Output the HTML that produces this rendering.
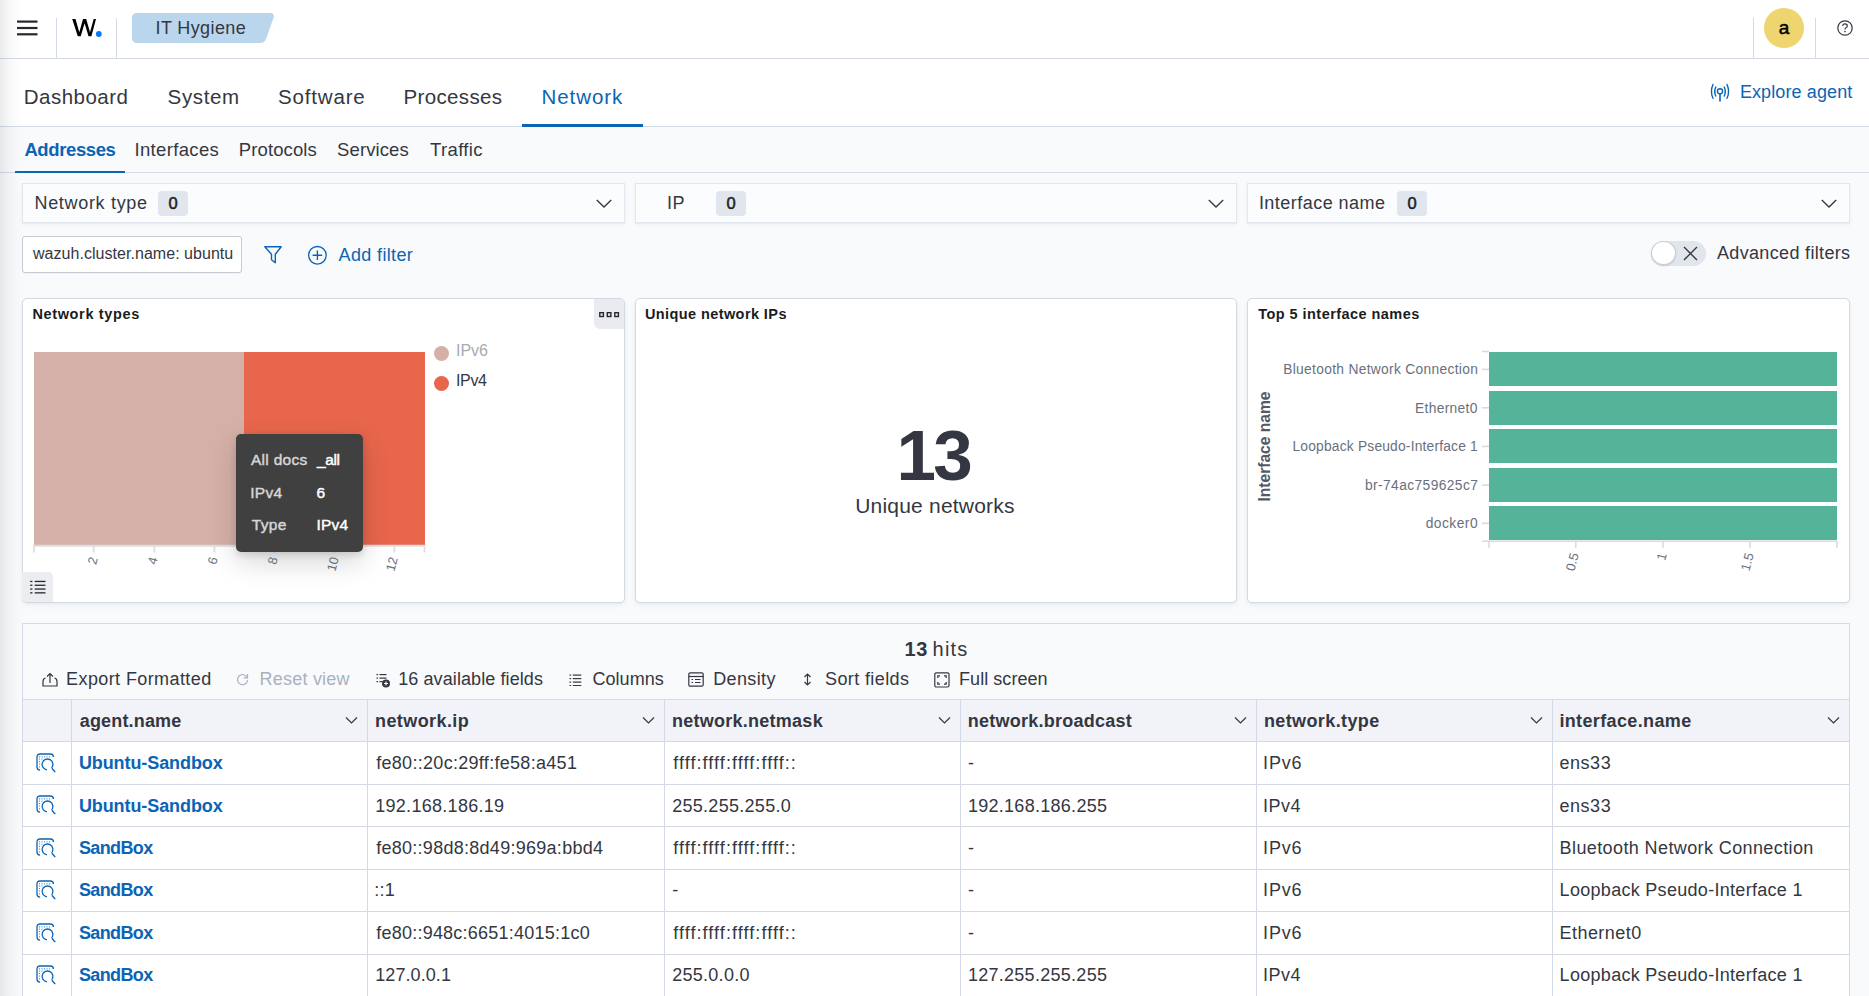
<!DOCTYPE html>
<html><head><meta charset="utf-8">
<style>
*{box-sizing:border-box;margin:0;padding:0}
html,body{width:1869px;height:996px;overflow:hidden}
body{position:relative;background:#F9FAFC;font-family:"Liberation Sans",sans-serif;color:#343741}
.t{position:absolute;white-space:pre;line-height:1}
.abs{position:absolute}
.hdr{left:0;top:0;width:1869px;height:59px;background:#fff;border-bottom:1px solid #D3DAE6}
.tabs{left:0;top:59px;width:1869px;height:68px;background:#fff;border-bottom:1px solid #D3DAE6}
.subtabs{left:0;top:127px;width:1869px;height:46px;background:#F9FAFC;border-bottom:1px solid #D3DAE6}
.vdiv{width:1px;background:#D3DAE6}
.fbox{top:183px;height:39.5px;background:#FBFCFD;border:1px solid #E1E6EF;box-shadow:0 1px 1px rgba(0,0,0,.03),0 2px 4px rgba(0,0,0,.04)}
.badge{top:191px;height:25px;width:30px;background:#E0E5EE;border-radius:4px;font:16.5px/24px "Liberation Sans";color:#1A1C21;text-align:center;-webkit-text-stroke:0.5px #1A1C21}
.panel{top:298px;height:305px;background:#fff;border:1px solid #D3DAE6;border-radius:5px;box-shadow:0 1px 3px rgba(0,0,0,.05),0 3px 7px rgba(0,0,0,.035)}
.lshadow{left:0;top:0;width:22px;height:996px;background:linear-gradient(to right,rgba(110,112,120,.14),rgba(110,112,120,.045) 50%,rgba(110,112,120,0));pointer-events:none}
</style></head><body>

<!-- header -->
<div class="abs hdr"></div>
<svg class="abs" style="left:17px;top:20px" width="21" height="16" viewBox="0 0 21 16">
  <rect x="0" y="0.5" width="20.5" height="2.2" fill="#25282F"/>
  <rect x="0" y="6.9" width="20.5" height="2.2" fill="#25282F"/>
  <rect x="0" y="13.2" width="20.5" height="2.2" fill="#25282F"/>
</svg>
<div class="abs vdiv" style="left:56px;top:18px;height:41px"></div>
<svg class="abs" style="left:70px;top:17px" width="34" height="22" viewBox="70 17 34 22">
  <path d="M72.2 19.1 H75.5 L79.3 32.2 L83 19.1 H86.2 L90 32.2 L93.7 19.1 H96 L91.4 36.2 H88.5 L84.6 23.3 L80.7 36.2 H77.8 Z" fill="#000"/>
  <circle cx="98.8" cy="34" r="2.9" fill="#0A77FA"/>
</svg>
<div class="abs vdiv" style="left:116px;top:18px;height:41px"></div>
<svg class="abs" style="left:131px;top:12px" width="145" height="32" viewBox="0 0 145 32">
  <path d="M6 1 H139 Q144 1 142.5 6 L135 27 Q133.5 31 129 31 H6 Q1 31 1 26 V6 Q1 1 6 1 Z" fill="#B9D6EC"/>
</svg>
<div class="abs vdiv" style="left:1753px;top:18px;height:41px"></div>
<div class="abs" style="left:1764px;top:8px;width:40px;height:40px;border-radius:50%;background:#EFD56F;font:19px/39px 'Liberation Sans';color:#000;text-align:center;-webkit-text-stroke:0.5px #000">a</div>
<div class="abs vdiv" style="left:1815px;top:18px;height:41px"></div>
<svg class="abs" style="left:1836px;top:19px" width="18" height="18" viewBox="0 0 18 18">
  <circle cx="9" cy="9" r="7.2" fill="none" stroke="#343741" stroke-width="1.2"/>
  <path d="M6.7 7.1 Q6.7 4.8 9 4.8 Q11.3 4.8 11.3 6.9 Q11.3 8.3 9.6 9 Q9 9.3 9 10.4" fill="none" stroke="#343741" stroke-width="1.2"/>
  <circle cx="9" cy="12.6" r="0.8" fill="#343741"/>
</svg>

<!-- tabs -->
<div class="abs tabs"></div>
<div class="abs" style="left:522px;top:124px;width:121px;height:3px;background:#0B64B4"></div>
<svg class="abs" style="left:1709px;top:83px" width="22" height="19" viewBox="0 0 22 19">
  <g fill="none" stroke="#0B64B4" stroke-width="1.4" stroke-linecap="round">
    <path d="M4 1.5 Q0.8 8.5 4 15.3"/>
    <path d="M6.8 4 Q4.6 8.5 6.8 13"/>
    <path d="M18 1.5 Q21.2 8.5 18 15.3"/>
    <path d="M15.2 4 Q17.4 8.5 15.2 13"/>
    <circle cx="11" cy="8.3" r="2.6"/>
    <path d="M11 11 V18" stroke-width="1.6"/>
  </g>
</svg>

<!-- subtabs -->
<div class="abs subtabs"></div>
<div class="abs" style="left:15px;top:170.5px;width:110px;height:2.5px;background:#0B64B4"></div>

<!-- filter boxes -->
<div class="abs fbox" style="left:22px;width:603px"></div>
<div class="abs fbox" style="left:635px;width:602px"></div>
<div class="abs fbox" style="left:1247px;width:603px"></div>
<div class="abs badge" style="left:158px">0</div>
<div class="abs badge" style="left:716px">0</div>
<div class="abs badge" style="left:1397px">0</div>
<svg class="abs" style="left:596px;top:198.5px" width="16" height="10" viewBox="0 0 16 10"><path d="M0.8 1 L8 8 L15.2 1" fill="none" stroke="#343741" stroke-width="1.35"/></svg>
<svg class="abs" style="left:1208px;top:198.5px" width="16" height="10" viewBox="0 0 16 10"><path d="M0.8 1 L8 8 L15.2 1" fill="none" stroke="#343741" stroke-width="1.35"/></svg>
<svg class="abs" style="left:1821px;top:198.5px" width="16" height="10" viewBox="0 0 16 10"><path d="M0.8 1 L8 8 L15.2 1" fill="none" stroke="#343741" stroke-width="1.35"/></svg>

<!-- query bar -->
<div class="abs" style="left:22px;top:236px;width:220px;height:37px;background:#fff;border:1px solid #C5CBD4;border-radius:3px;box-shadow:0 1px 1px rgba(0,0,0,.05)"></div>
<svg class="abs" style="left:263px;top:245px" width="20" height="20" viewBox="0 0 20 20">
  <path d="M1.8 1.8 H18.2 L12.3 9.2 V17.8 L8.5 14.8 V9.2 Z" fill="none" stroke="#0B64B4" stroke-width="1.4" stroke-linejoin="round"/>
</svg>
<svg class="abs" style="left:307px;top:245px" width="21" height="21" viewBox="0 0 21 21">
  <circle cx="10.4" cy="10.3" r="8.8" fill="none" stroke="#0B64B4" stroke-width="1.3"/>
  <path d="M10.4 5.5 V15.1 M5.6 10.3 H15.2" stroke="#0B64B4" stroke-width="1.4"/>
</svg>
<!-- toggle -->
<div class="abs" style="left:1651px;top:241px;width:55px;height:25px;border-radius:13px;background:#E1E5EC"></div>
<div class="abs" style="left:1651px;top:241px;width:24.5px;height:24px;border-radius:50%;background:#fff;border:1px solid #C6CCD6;box-shadow:0 1px 2px rgba(0,0,0,.12)"></div>
<svg class="abs" style="left:1683px;top:246px" width="15" height="15" viewBox="0 0 15 15"><path d="M1 1 L14 14 M14 1 L1 14" stroke="#343741" stroke-width="1.4"/></svg>

<!-- panels -->
<div class="abs panel" style="left:22px;width:603px"></div>
<div class="abs panel" style="left:635px;width:602px"></div>
<div class="abs panel" style="left:1247px;width:603px"></div>

<!-- panel 1 chart -->
<div class="abs" style="left:594px;top:299px;width:30px;height:30px;background:#E9EBEE;border-radius:0 4px 0 6px"></div>
<svg class="abs" style="left:598px;top:310.5px" width="23" height="8" viewBox="0 0 23 8">
  <g fill="none" stroke="#25282F" stroke-width="1.4"><rect x="1.8" y="1.7" width="3.6" height="3.8"/><rect x="9.3" y="1.7" width="3.6" height="3.8"/><rect x="16.8" y="1.7" width="3.6" height="3.8"/></g>
</svg>
<div class="abs" style="left:34px;top:352px;width:210px;height:193px;background:#D5B0A8"></div>
<div class="abs" style="left:244px;top:352px;width:181px;height:193px;background:#E7664C"></div>
<svg class="abs" style="left:30px;top:540px" width="400" height="40" viewBox="0 0 400 40">
  <path d="M3.5 5.8 H394.5" stroke="#DCDDDF" stroke-width="2"/>
  <g stroke="#DCDDDF" stroke-width="1.8">
    <path d="M3.9 5 V12.5"/><path d="M63.7 5 V12.5"/><path d="M124.4 5 V12.5"/><path d="M184.4 5 V12.5"/><path d="M244.4 5 V12.5"/><path d="M304.6 5 V12.5"/><path d="M364.4 5 V12.5"/><path d="M394.5 5 V12.5"/>
  </g>
</svg>
<div class="abs" style="left:434px;top:346px;width:15px;height:15px;border-radius:50%;background:#D5B0A8"></div>
<div class="abs" style="left:434px;top:376px;width:15px;height:15px;border-radius:50%;background:#E7664C"></div>
<div class="abs" style="left:22px;top:572px;width:31px;height:30px;background:#EBEDF0;border-radius:0 5px 0 5px"></div>
<svg class="abs" style="left:29px;top:579px" width="18" height="16" viewBox="0 0 18 16">
  <g fill="#25282F"><rect x="1.2" y="1.8" width="2.2" height="1.3"/><rect x="1.2" y="5.6" width="2.2" height="1.3"/><rect x="1.2" y="9.4" width="2.2" height="1.3"/><rect x="1.2" y="13.2" width="2.2" height="1.3"/>
  <rect x="5.7" y="1.8" width="10.8" height="1.3"/><rect x="5.7" y="5.6" width="10.8" height="1.3"/><rect x="5.7" y="9.4" width="10.8" height="1.3"/><rect x="5.7" y="13.2" width="10.8" height="1.3"/></g>
</svg>
<!-- tooltip -->
<div class="abs" style="left:236px;top:434px;width:127px;height:118px;background:#404040;border-radius:5px;box-shadow:0 10px 28px rgba(0,0,0,.16),0 3px 7px rgba(0,0,0,.12)"></div>

<!-- panel 3 chart -->
<div class="abs" style="left:1489px;top:352px;width:348px;height:34.3px;background:#54B399"></div>
<div class="abs" style="left:1489px;top:390.6px;width:348px;height:34.3px;background:#54B399"></div>
<div class="abs" style="left:1489px;top:429px;width:348px;height:34.3px;background:#54B399"></div>
<div class="abs" style="left:1489px;top:467.5px;width:348px;height:34.3px;background:#54B399"></div>
<div class="abs" style="left:1489px;top:506px;width:348px;height:34.3px;background:#54B399"></div>
<svg class="abs" style="left:1478px;top:345px" width="370" height="210" viewBox="0 0 370 210">
  <g stroke="#D9DADC" stroke-width="1.6">
    <path d="M4 6.5 H11"/><path d="M4 24.4 H11"/><path d="M4 62.8 H11"/><path d="M4 101.4 H11"/><path d="M4 140.1 H11"/><path d="M4 178.3 H11"/>
    <path d="M4 196.3 H359"/>
    <path d="M11 196 V202.8"/><path d="M97.8 196 V202.8"/><path d="M185 196 V202.8"/><path d="M272 196 V202.8"/><path d="M358.9 196 V202.8"/>
  </g>
</svg>

<!-- table -->
<div class="abs" style="left:22px;top:623px;width:1828px;height:400px;background:#F9FAFC;border:1px solid #D3DAE6"></div>
<div class="abs" style="left:23px;top:699px;width:1826px;height:43px;background:#F1F3F8;border-top:1px solid #D3DAE6;border-bottom:1px solid #D3DAE6"></div>
<div class="abs" style="left:23px;top:742px;width:1826px;height:260px;background:#fff"></div>
<div id="rowlines"></div>
<div class="abs" style="left:23px;top:784px;width:1826px;height:1px;background:#D3DAE6"></div>
<div class="abs" style="left:23px;top:826px;width:1826px;height:1px;background:#D3DAE6"></div>
<div class="abs" style="left:23px;top:869px;width:1826px;height:1px;background:#D3DAE6"></div>
<div class="abs" style="left:23px;top:911px;width:1826px;height:1px;background:#D3DAE6"></div>
<div class="abs" style="left:23px;top:954px;width:1826px;height:1px;background:#D3DAE6"></div>
<div class="abs" style="left:23px;top:996px;width:1826px;height:1px;background:#D3DAE6"></div>
<div class="abs" style="left:70.80px;top:699px;width:1px;height:300px;background:#D3DAE6"></div>
<div class="abs" style="left:367.10px;top:699px;width:1px;height:300px;background:#D3DAE6"></div>
<div class="abs" style="left:664.10px;top:699px;width:1px;height:300px;background:#D3DAE6"></div>
<div class="abs" style="left:959.80px;top:699px;width:1px;height:300px;background:#D3DAE6"></div>
<div class="abs" style="left:1256.00px;top:699px;width:1px;height:300px;background:#D3DAE6"></div>
<div class="abs" style="left:1551.50px;top:699px;width:1px;height:300px;background:#D3DAE6"></div>
<svg class="abs" style="left:345.10px;top:716px" width="13" height="9" viewBox="0 0 13 9"><path d="M1 1.5 L6.5 7 L12 1.5" fill="none" stroke="#343741" stroke-width="1.2"/></svg>
<svg class="abs" style="left:642.10px;top:716px" width="13" height="9" viewBox="0 0 13 9"><path d="M1 1.5 L6.5 7 L12 1.5" fill="none" stroke="#343741" stroke-width="1.2"/></svg>
<svg class="abs" style="left:937.80px;top:716px" width="13" height="9" viewBox="0 0 13 9"><path d="M1 1.5 L6.5 7 L12 1.5" fill="none" stroke="#343741" stroke-width="1.2"/></svg>
<svg class="abs" style="left:1234.00px;top:716px" width="13" height="9" viewBox="0 0 13 9"><path d="M1 1.5 L6.5 7 L12 1.5" fill="none" stroke="#343741" stroke-width="1.2"/></svg>
<svg class="abs" style="left:1529.50px;top:716px" width="13" height="9" viewBox="0 0 13 9"><path d="M1 1.5 L6.5 7 L12 1.5" fill="none" stroke="#343741" stroke-width="1.2"/></svg>
<svg class="abs" style="left:1827.00px;top:716px" width="13" height="9" viewBox="0 0 13 9"><path d="M1 1.5 L6.5 7 L12 1.5" fill="none" stroke="#343741" stroke-width="1.2"/></svg>
<svg class="abs" style="left:35.5px;top:752.90px" width="21" height="21" viewBox="0 0 21 21"><g fill="none" stroke="#0B64B4" stroke-width="1.3"><path d="M4.1 17.2 Q1 17 1 14 V4 Q1 1 4 1 H14.5 Q17.4 1 17.4 3.9"/><path d="M11.03 16.78 A5.4 5.4 0 1 1 15.64 14.87"/><path d="M15.9 15.2 L19.2 19.1" stroke-width="1.4"/></g><g fill="#0B64B4" opacity=".85"><circle cx="3.5" cy="3.8" r=".6"/><circle cx="6" cy="3.8" r=".6"/><circle cx="8.5" cy="3.8" r=".6"/><circle cx="11" cy="3.8" r=".6"/><circle cx="13.6" cy="3.8" r=".6"/><circle cx="3.5" cy="6" r=".6"/><circle cx="6" cy="6" r=".6"/><circle cx="3.5" cy="8.6" r=".6"/><circle cx="3.5" cy="11" r=".6"/><circle cx="3.5" cy="13.8" r=".6"/></g></svg>
<svg class="abs" style="left:35.5px;top:795.35px" width="21" height="21" viewBox="0 0 21 21"><g fill="none" stroke="#0B64B4" stroke-width="1.3"><path d="M4.1 17.2 Q1 17 1 14 V4 Q1 1 4 1 H14.5 Q17.4 1 17.4 3.9"/><path d="M11.03 16.78 A5.4 5.4 0 1 1 15.64 14.87"/><path d="M15.9 15.2 L19.2 19.1" stroke-width="1.4"/></g><g fill="#0B64B4" opacity=".85"><circle cx="3.5" cy="3.8" r=".6"/><circle cx="6" cy="3.8" r=".6"/><circle cx="8.5" cy="3.8" r=".6"/><circle cx="11" cy="3.8" r=".6"/><circle cx="13.6" cy="3.8" r=".6"/><circle cx="3.5" cy="6" r=".6"/><circle cx="6" cy="6" r=".6"/><circle cx="3.5" cy="8.6" r=".6"/><circle cx="3.5" cy="11" r=".6"/><circle cx="3.5" cy="13.8" r=".6"/></g></svg>
<svg class="abs" style="left:35.5px;top:837.80px" width="21" height="21" viewBox="0 0 21 21"><g fill="none" stroke="#0B64B4" stroke-width="1.3"><path d="M4.1 17.2 Q1 17 1 14 V4 Q1 1 4 1 H14.5 Q17.4 1 17.4 3.9"/><path d="M11.03 16.78 A5.4 5.4 0 1 1 15.64 14.87"/><path d="M15.9 15.2 L19.2 19.1" stroke-width="1.4"/></g><g fill="#0B64B4" opacity=".85"><circle cx="3.5" cy="3.8" r=".6"/><circle cx="6" cy="3.8" r=".6"/><circle cx="8.5" cy="3.8" r=".6"/><circle cx="11" cy="3.8" r=".6"/><circle cx="13.6" cy="3.8" r=".6"/><circle cx="3.5" cy="6" r=".6"/><circle cx="6" cy="6" r=".6"/><circle cx="3.5" cy="8.6" r=".6"/><circle cx="3.5" cy="11" r=".6"/><circle cx="3.5" cy="13.8" r=".6"/></g></svg>
<svg class="abs" style="left:35.5px;top:880.25px" width="21" height="21" viewBox="0 0 21 21"><g fill="none" stroke="#0B64B4" stroke-width="1.3"><path d="M4.1 17.2 Q1 17 1 14 V4 Q1 1 4 1 H14.5 Q17.4 1 17.4 3.9"/><path d="M11.03 16.78 A5.4 5.4 0 1 1 15.64 14.87"/><path d="M15.9 15.2 L19.2 19.1" stroke-width="1.4"/></g><g fill="#0B64B4" opacity=".85"><circle cx="3.5" cy="3.8" r=".6"/><circle cx="6" cy="3.8" r=".6"/><circle cx="8.5" cy="3.8" r=".6"/><circle cx="11" cy="3.8" r=".6"/><circle cx="13.6" cy="3.8" r=".6"/><circle cx="3.5" cy="6" r=".6"/><circle cx="6" cy="6" r=".6"/><circle cx="3.5" cy="8.6" r=".6"/><circle cx="3.5" cy="11" r=".6"/><circle cx="3.5" cy="13.8" r=".6"/></g></svg>
<svg class="abs" style="left:35.5px;top:922.70px" width="21" height="21" viewBox="0 0 21 21"><g fill="none" stroke="#0B64B4" stroke-width="1.3"><path d="M4.1 17.2 Q1 17 1 14 V4 Q1 1 4 1 H14.5 Q17.4 1 17.4 3.9"/><path d="M11.03 16.78 A5.4 5.4 0 1 1 15.64 14.87"/><path d="M15.9 15.2 L19.2 19.1" stroke-width="1.4"/></g><g fill="#0B64B4" opacity=".85"><circle cx="3.5" cy="3.8" r=".6"/><circle cx="6" cy="3.8" r=".6"/><circle cx="8.5" cy="3.8" r=".6"/><circle cx="11" cy="3.8" r=".6"/><circle cx="13.6" cy="3.8" r=".6"/><circle cx="3.5" cy="6" r=".6"/><circle cx="6" cy="6" r=".6"/><circle cx="3.5" cy="8.6" r=".6"/><circle cx="3.5" cy="11" r=".6"/><circle cx="3.5" cy="13.8" r=".6"/></g></svg>
<svg class="abs" style="left:35.5px;top:965.15px" width="21" height="21" viewBox="0 0 21 21"><g fill="none" stroke="#0B64B4" stroke-width="1.3"><path d="M4.1 17.2 Q1 17 1 14 V4 Q1 1 4 1 H14.5 Q17.4 1 17.4 3.9"/><path d="M11.03 16.78 A5.4 5.4 0 1 1 15.64 14.87"/><path d="M15.9 15.2 L19.2 19.1" stroke-width="1.4"/></g><g fill="#0B64B4" opacity=".85"><circle cx="3.5" cy="3.8" r=".6"/><circle cx="6" cy="3.8" r=".6"/><circle cx="8.5" cy="3.8" r=".6"/><circle cx="11" cy="3.8" r=".6"/><circle cx="13.6" cy="3.8" r=".6"/><circle cx="3.5" cy="6" r=".6"/><circle cx="6" cy="6" r=".6"/><circle cx="3.5" cy="8.6" r=".6"/><circle cx="3.5" cy="11" r=".6"/><circle cx="3.5" cy="13.8" r=".6"/></g></svg>
<svg class="abs" style="left:42px;top:672px" width="16" height="15" viewBox="0 0 16 15"><g fill="none" stroke="#343741" stroke-width="1.2"><path d="M3.5 6 Q1 6.5 1 9.5 V14 H15 V9.5 Q15 6.5 12.5 6"/><path d="M8 11 V1.5 M5 4.5 L8 1.5 L11 4.5"/></g></svg>
<svg class="abs" style="left:236px;top:673px" width="13" height="13" viewBox="0 0 13 13"><g fill="none" stroke="#A9B1BE" stroke-width="1.2"><path d="M11 4.5 A5 5 0 1 0 11.5 7"/><path d="M11.5 1 V4.8 H7.7"/></g></svg>
<svg class="abs" style="left:376px;top:673px" width="15" height="15" viewBox="0 0 15 15"><g fill="#343741"><rect x="0.5" y="1" width="1.6" height="1.2"/><rect x="3.5" y="1" width="7" height="1.2"/><rect x="0.5" y="4.5" width="1.6" height="1.2"/><rect x="3.5" y="4.5" width="7" height="1.2"/><rect x="0.5" y="8" width="1.6" height="1.2"/><rect x="3.5" y="8" width="3" height="1.2"/><circle cx="10" cy="10.5" r="4"/></g><path d="M10 8.5 V12.5 M8 10.5 H12" stroke="#fff" stroke-width="1.1"/></svg>
<svg class="abs" style="left:569px;top:673px" width="13" height="13" viewBox="0 0 13 13"><g fill="#343741"><rect x="0.5" y="1.5" width="1.6" height="1.2"/><rect x="3.8" y="1.5" width="8.5" height="1.2"/><rect x="0.5" y="5" width="1.6" height="1.2"/><rect x="3.8" y="5" width="8.5" height="1.2"/><rect x="0.5" y="8.5" width="1.6" height="1.2"/><rect x="3.8" y="8.5" width="8.5" height="1.2"/><rect x="0.5" y="12" width="1.6" height="1"/><rect x="3.8" y="12" width="8.5" height="1"/></g></svg>
<svg class="abs" style="left:688px;top:672px" width="16" height="15" viewBox="0 0 16 15"><g fill="none" stroke="#343741" stroke-width="1.2"><rect x="0.8" y="0.8" width="14.4" height="13.4" rx="1.5"/><path d="M0.8 4.5 H15.2"/><path d="M3.5 7.5 H5 M7 7.5 H12.5 M3.5 10.5 H5 M7 10.5 H12.5"/></g></svg>
<svg class="abs" style="left:802px;top:672px" width="11" height="15" viewBox="0 0 11 15"><g fill="none" stroke="#343741" stroke-width="1.2"><path d="M5.5 2 V13 M2.5 5 L5.5 2 L8.5 5 M2.5 10 L5.5 13 L8.5 10"/></g></svg>
<svg class="abs" style="left:933.5px;top:672px" width="16" height="16" viewBox="0 0 16 16"><g fill="none" stroke="#343741" stroke-width="1.2"><rect x="0.8" y="0.8" width="14.2" height="14.2" rx="1.5"/><path d="M3.8 6 V3.8 H6 M10 3.8 H12.2 V6 M12.2 10 V12.2 H10 M6 12.2 H3.8 V10"/></g></svg>
<div class="abs" style="left:52.70px;top:557px;width:40px;height:13px;font:12.8px/13px 'Liberation Sans';color:#69707D;text-align:right;transform-origin:100% 0;transform:rotate(-75deg) translate(0px,-6px)">2</div>
<div class="abs" style="left:113.40px;top:557px;width:40px;height:13px;font:12.8px/13px 'Liberation Sans';color:#69707D;text-align:right;transform-origin:100% 0;transform:rotate(-75deg) translate(0px,-6px)">4</div>
<div class="abs" style="left:173.40px;top:557px;width:40px;height:13px;font:12.8px/13px 'Liberation Sans';color:#69707D;text-align:right;transform-origin:100% 0;transform:rotate(-75deg) translate(0px,-6px)">6</div>
<div class="abs" style="left:233.40px;top:557px;width:40px;height:13px;font:12.8px/13px 'Liberation Sans';color:#69707D;text-align:right;transform-origin:100% 0;transform:rotate(-75deg) translate(0px,-6px)">8</div>
<div class="abs" style="left:293.60px;top:557px;width:40px;height:13px;font:12.8px/13px 'Liberation Sans';color:#69707D;text-align:right;transform-origin:100% 0;transform:rotate(-75deg) translate(0px,-6px)">10</div>
<div class="abs" style="left:353.40px;top:557px;width:40px;height:13px;font:12.8px/13px 'Liberation Sans';color:#69707D;text-align:right;transform-origin:100% 0;transform:rotate(-75deg) translate(0px,-6px)">12</div>
<div class="abs" style="left:1534.30px;top:553px;width:40px;height:13px;font:13px/13px 'Liberation Sans';color:#69707D;text-align:right;transform-origin:100% 0;transform:rotate(-75deg) translate(0px,-6px)">0.5</div>
<div class="abs" style="left:1621.50px;top:553px;width:40px;height:13px;font:13px/13px 'Liberation Sans';color:#69707D;text-align:right;transform-origin:100% 0;transform:rotate(-75deg) translate(0px,-6px)">1</div>
<div class="abs" style="left:1708.50px;top:553px;width:40px;height:13px;font:13px/13px 'Liberation Sans';color:#69707D;text-align:right;transform-origin:100% 0;transform:rotate(-75deg) translate(0px,-6px)">1.5</div>
<div class="abs" style="left:1203.5px;top:439px;width:120px;height:15px;font:bold 15.6px/15px 'Liberation Sans';color:#535966;text-align:center;transform:rotate(-90deg)">Interface name</div>

<div class=t style="left:155.50px;top:19.00px;font-size:18px;color:#343741;letter-spacing:0.389px;">IT Hygiene</div>
<div class=t style="left:1739.90px;top:82.90px;font-size:18px;color:#0B64B4;letter-spacing:0.108px;">Explore agent</div>
<div class=t style="left:23.80px;top:87.10px;font-size:20.5px;color:#343741;letter-spacing:0.475px;">Dashboard</div>
<div class=t style="left:167.60px;top:87.10px;font-size:20.5px;color:#343741;letter-spacing:0.620px;">System</div>
<div class=t style="left:278.00px;top:87.10px;font-size:20.5px;color:#343741;letter-spacing:0.829px;">Software</div>
<div class=t style="left:403.40px;top:87.10px;font-size:20.5px;color:#343741;letter-spacing:0.375px;">Processes</div>
<div class=t style="left:541.60px;top:87.10px;font-size:20.5px;color:#0B64B4;letter-spacing:0.900px;">Network</div>
<div class=t style="left:24.40px;top:141.20px;font-size:18.5px;color:#0B64B4;font-weight:700;letter-spacing:-0.387px;">Addresses</div>
<div class=t style="left:134.40px;top:141.20px;font-size:18.5px;color:#343741;letter-spacing:0.356px;">Interfaces</div>
<div class=t style="left:238.80px;top:141.20px;font-size:18.5px;color:#343741;letter-spacing:0.112px;">Protocols</div>
<div class=t style="left:337.10px;top:141.20px;font-size:18.5px;color:#343741;letter-spacing:0.086px;">Services</div>
<div class=t style="left:430.10px;top:141.20px;font-size:18.5px;color:#343741;letter-spacing:0.333px;">Traffic</div>
<div class=t style="left:34.50px;top:194.40px;font-size:18px;color:#343741;letter-spacing:0.682px;">Network type</div>
<div class=t style="left:667.10px;top:194.20px;font-size:18px;color:#343741;letter-spacing:0.300px;">IP</div>
<div class=t style="left:1258.90px;top:194.20px;font-size:18px;color:#343741;letter-spacing:0.469px;">Interface name</div>
<div class=t style="left:33.00px;top:246.20px;font-size:16px;color:#343741;letter-spacing:0.040px;">wazuh.cluster.name: ubuntu</div>
<div class=t style="left:338.60px;top:245.80px;font-size:18px;color:#0B64B4;letter-spacing:0.356px;">Add filter</div>
<div class=t style="left:1717.00px;top:244.40px;font-size:18px;color:#343741;letter-spacing:0.333px;">Advanced filters</div>
<div class=t style="left:32.40px;top:306.70px;font-size:14.5px;color:#1A1C21;font-weight:700;letter-spacing:0.642px;">Network types</div>
<div class=t style="left:644.90px;top:306.70px;font-size:14.5px;color:#1A1C21;font-weight:700;letter-spacing:0.412px;">Unique network IPs</div>
<div class=t style="left:1258.30px;top:306.70px;font-size:14.5px;color:#1A1C21;font-weight:700;letter-spacing:0.445px;">Top 5 interface names</div>
<div class=t style="left:456.00px;top:342.70px;font-size:16px;color:#A7ABB2;">IPv6</div>
<div class=t style="left:456.00px;top:373.00px;font-size:16px;color:#343741;letter-spacing:-0.333px;">IPv4</div>
<div class=t style="left:251.00px;top:452.40px;font-size:15.5px;color:#D6D6D6;letter-spacing:0.286px;-webkit-text-stroke:0.45px #D6D6D6;">All docs</div>
<div class=t style="left:317.10px;top:452.40px;font-size:15.5px;color:#FFFFFF;letter-spacing:-0.400px;-webkit-text-stroke:0.45px #FFFFFF;">_all</div>
<div class=t style="left:250.30px;top:484.80px;font-size:15.5px;color:#D6D6D6;letter-spacing:0.233px;-webkit-text-stroke:0.45px #D6D6D6;">IPv4</div>
<div class=t style="left:316.40px;top:484.80px;font-size:15.5px;color:#FFFFFF;-webkit-text-stroke:0.45px #FFFFFF;">6</div>
<div class=t style="left:251.70px;top:516.80px;font-size:15.5px;color:#D6D6D6;letter-spacing:0.400px;-webkit-text-stroke:0.45px #D6D6D6;">Type</div>
<div class=t style="left:316.40px;top:516.80px;font-size:15.5px;color:#FFFFFF;letter-spacing:0.200px;-webkit-text-stroke:0.45px #FFFFFF;">IPv4</div>
<div class=t style="left:896.40px;top:419.70px;font-size:71px;color:#343741;font-weight:700;letter-spacing:-2.700px;">13</div>
<div class=t style="left:855.20px;top:495.30px;font-size:21px;color:#343741;letter-spacing:0.207px;">Unique networks</div>
<div class=t style="left:1283.20px;top:363.30px;font-size:13.8px;color:#69707D;letter-spacing:0.307px;">Bluetooth Network Connection</div>
<div class=t style="left:1415.00px;top:401.70px;font-size:13.8px;color:#69707D;letter-spacing:0.312px;">Ethernet0</div>
<div class=t style="left:1292.50px;top:440.30px;font-size:13.8px;color:#69707D;letter-spacing:0.192px;">Loopback Pseudo-Interface 1</div>
<div class=t style="left:1365.00px;top:479.00px;font-size:13.8px;color:#69707D;letter-spacing:0.393px;">br-74ac759625c7</div>
<div class=t style="left:1425.70px;top:517.20px;font-size:13.8px;color:#69707D;letter-spacing:0.467px;">docker0</div>
<div class=t style="left:904.50px;top:639.00px;font-size:20px;color:#343741;font-weight:700;letter-spacing:0.700px;">13</div>
<div class=t style="left:932.60px;top:639.00px;font-size:20px;color:#343741;letter-spacing:1.200px;">hits</div>
<div class=t style="left:66.10px;top:670.00px;font-size:18px;color:#343741;letter-spacing:0.400px;">Export Formatted</div>
<div class=t style="left:259.40px;top:670.00px;font-size:18px;color:#A9B1BE;letter-spacing:0.244px;">Reset view</div>
<div class=t style="left:398.20px;top:670.00px;font-size:18px;color:#343741;letter-spacing:0.094px;">16 available fields</div>
<div class=t style="left:592.40px;top:670.00px;font-size:18px;color:#343741;letter-spacing:0.067px;">Columns</div>
<div class=t style="left:713.20px;top:670.00px;font-size:18px;color:#343741;letter-spacing:0.383px;">Density</div>
<div class=t style="left:825.00px;top:670.00px;font-size:18px;color:#343741;letter-spacing:0.390px;">Sort fields</div>
<div class=t style="left:959.00px;top:670.00px;font-size:18px;color:#343741;letter-spacing:0.060px;">Full screen</div>
<div class=t style="left:79.70px;top:712.20px;font-size:18px;color:#343741;font-weight:700;letter-spacing:0.178px;">agent.name</div>
<div class=t style="left:375.00px;top:712.20px;font-size:18px;color:#343741;font-weight:700;letter-spacing:0.411px;">network.ip</div>
<div class=t style="left:672.00px;top:712.20px;font-size:18px;color:#343741;font-weight:700;letter-spacing:0.257px;">network.netmask</div>
<div class=t style="left:967.70px;top:712.20px;font-size:18px;color:#343741;font-weight:700;letter-spacing:0.256px;">network.broadcast</div>
<div class=t style="left:1263.90px;top:712.20px;font-size:18px;color:#343741;font-weight:700;letter-spacing:0.391px;">network.type</div>
<div class=t style="left:1559.40px;top:712.20px;font-size:18px;color:#343741;font-weight:700;letter-spacing:0.369px;">interface.name</div>
<div class=t style="left:78.90px;top:754.10px;font-size:18px;color:#0B64B4;font-weight:700;letter-spacing:-0.085px;">Ubuntu-Sandbox</div>
<div class=t style="left:376.20px;top:754.10px;font-size:18px;color:#343741;letter-spacing:0.300px;">fe80::20c:29ff:fe58:a451</div>
<div class=t style="left:673.20px;top:754.10px;font-size:18px;color:#343741;letter-spacing:1.075px;">ffff:ffff:ffff:ffff::</div>
<div class=t style="left:967.90px;top:754.10px;font-size:18px;color:#343741;">-</div>
<div class=t style="left:1263.10px;top:754.10px;font-size:18px;color:#343741;letter-spacing:0.800px;">IPv6</div>
<div class=t style="left:1559.60px;top:754.10px;font-size:18px;color:#343741;letter-spacing:0.500px;">ens33</div>
<div class=t style="left:78.90px;top:796.55px;font-size:18px;color:#0B64B4;font-weight:700;letter-spacing:-0.085px;">Ubuntu-Sandbox</div>
<div class=t style="left:375.20px;top:796.55px;font-size:18px;color:#343741;letter-spacing:0.292px;">192.168.186.19</div>
<div class=t style="left:672.20px;top:796.55px;font-size:18px;color:#343741;letter-spacing:0.285px;">255.255.255.0</div>
<div class=t style="left:967.90px;top:796.55px;font-size:18px;color:#343741;letter-spacing:0.285px;">192.168.186.255</div>
<div class=t style="left:1263.10px;top:796.55px;font-size:18px;color:#343741;letter-spacing:0.467px;">IPv4</div>
<div class=t style="left:1559.60px;top:796.55px;font-size:18px;color:#343741;letter-spacing:0.500px;">ens33</div>
<div class=t style="left:78.90px;top:839.00px;font-size:18px;color:#0B64B4;font-weight:700;letter-spacing:-0.617px;">SandBox</div>
<div class=t style="left:376.20px;top:839.00px;font-size:18px;color:#343741;letter-spacing:0.275px;">fe80::98d8:8d49:969a:bbd4</div>
<div class=t style="left:673.20px;top:839.00px;font-size:18px;color:#343741;letter-spacing:1.075px;">ffff:ffff:ffff:ffff::</div>
<div class=t style="left:967.90px;top:839.00px;font-size:18px;color:#343741;">-</div>
<div class=t style="left:1263.10px;top:839.00px;font-size:18px;color:#343741;letter-spacing:0.800px;">IPv6</div>
<div class=t style="left:1559.60px;top:839.00px;font-size:18px;color:#343741;letter-spacing:0.393px;">Bluetooth Network Connection</div>
<div class=t style="left:78.90px;top:881.45px;font-size:18px;color:#0B64B4;font-weight:700;letter-spacing:-0.617px;">SandBox</div>
<div class=t style="left:374.20px;top:881.45px;font-size:18px;color:#343741;letter-spacing:0.255px;">::1</div>
<div class=t style="left:672.20px;top:881.45px;font-size:18px;color:#343741;">-</div>
<div class=t style="left:967.90px;top:881.45px;font-size:18px;color:#343741;">-</div>
<div class=t style="left:1263.10px;top:881.45px;font-size:18px;color:#343741;letter-spacing:0.800px;">IPv6</div>
<div class=t style="left:1559.60px;top:881.45px;font-size:18px;color:#343741;letter-spacing:0.296px;">Loopback Pseudo-Interface 1</div>
<div class=t style="left:78.90px;top:923.90px;font-size:18px;color:#0B64B4;font-weight:700;letter-spacing:-0.617px;">SandBox</div>
<div class=t style="left:376.20px;top:923.90px;font-size:18px;color:#343741;letter-spacing:0.235px;">fe80::948c:6651:4015:1c0</div>
<div class=t style="left:673.20px;top:923.90px;font-size:18px;color:#343741;letter-spacing:1.075px;">ffff:ffff:ffff:ffff::</div>
<div class=t style="left:967.90px;top:923.90px;font-size:18px;color:#343741;">-</div>
<div class=t style="left:1263.10px;top:923.90px;font-size:18px;color:#343741;letter-spacing:0.800px;">IPv6</div>
<div class=t style="left:1559.60px;top:923.90px;font-size:18px;color:#343741;letter-spacing:0.438px;">Ethernet0</div>
<div class=t style="left:78.90px;top:966.35px;font-size:18px;color:#0B64B4;font-weight:700;letter-spacing:-0.617px;">SandBox</div>
<div class=t style="left:375.20px;top:966.35px;font-size:18px;color:#343741;letter-spacing:0.087px;">127.0.0.1</div>
<div class=t style="left:672.20px;top:966.35px;font-size:18px;color:#343741;letter-spacing:0.277px;">255.0.0.0</div>
<div class=t style="left:967.90px;top:966.35px;font-size:18px;color:#343741;letter-spacing:0.279px;">127.255.255.255</div>
<div class=t style="left:1263.10px;top:966.35px;font-size:18px;color:#343741;letter-spacing:0.467px;">IPv4</div>
<div class=t style="left:1559.60px;top:966.35px;font-size:18px;color:#343741;letter-spacing:0.296px;">Loopback Pseudo-Interface 1</div>

<div class="abs lshadow"></div>
</body></html>
